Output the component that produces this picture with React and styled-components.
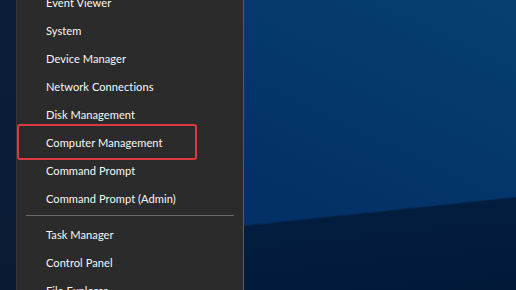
import styled, { createGlobalStyle } from "styled-components";

const Global = createGlobalStyle`
  html, body {
    margin: 0;
    padding: 0;
    width: 516px;
    height: 290px;
    overflow: hidden;
  }
  body {
    font-family: Lato, "Noto Sans", sans-serif;
  }
`;

const Desktop = styled.div`
  width: 516px;
  height: 290px;
  display: flex;
  overflow: hidden;
  background:
    linear-gradient(174deg, transparent 0 249px, #031d3f 251px, #021a38 100%),
    linear-gradient(205deg, #083f73 0%, #04366b 35%, #033067 60%, #042d60 100%);
`;

const Strip = styled.div`
  width: 16px;
  flex-shrink: 0;
  background: linear-gradient(180deg, #0b1d38 0%, #0a1a33 100%);
`;

const Menu = styled.div`
  width: 226px;
  flex-shrink: 0;
  background: #2b2b2b;
  border-left: 1px solid #343434;
  border-right: 1px solid #5c5c5c;
  display: flex;
  flex-direction: column;
  margin-top: -12px;
  overflow: hidden;
`;

const Item = styled.div`
  position: relative;
  flex-shrink: 0;
  height: 28px;
  display: flex;
  align-items: center;
  padding-left: 29px;
  color: #f7f7f7;
  font-size: 11.1px;
  letter-spacing: 0.05px;
  white-space: nowrap;

  ${(p) =>
    p.$marked &&
    `
    &::after {
      content: "";
      position: absolute;
      top: -4px;
      bottom: -4px;
      left: 0;
      width: 176px;
      border: 2px solid #dc3a40;
      border-radius: 3px;
    }
  `}
`;

const Separator = styled.div`
  flex-shrink: 0;
  height: 1px;
  margin: 3px 9px 4px;
  background: #6a6a6a;
`;

const top = [
  "Event Viewer",
  "System",
  "Device Manager",
  "Network Connections",
  "Disk Management",
  "Computer Management",
  "Command Prompt",
  "Command Prompt (Admin)",
];

const bottom = ["Task Manager", "Control Panel", "File Explorer"];

export default function App() {
  return (
    <>
      <Global />
      <Desktop>
        <Strip />
        <Menu>
          {top.map((label) => (
            <Item key={label} $marked={label === "Computer Management"}>
              {label}
            </Item>
          ))}
          <Separator />
          {bottom.map((label) => (
            <Item key={label}>{label}</Item>
          ))}
        </Menu>
      </Desktop>
    </>
  );
}
